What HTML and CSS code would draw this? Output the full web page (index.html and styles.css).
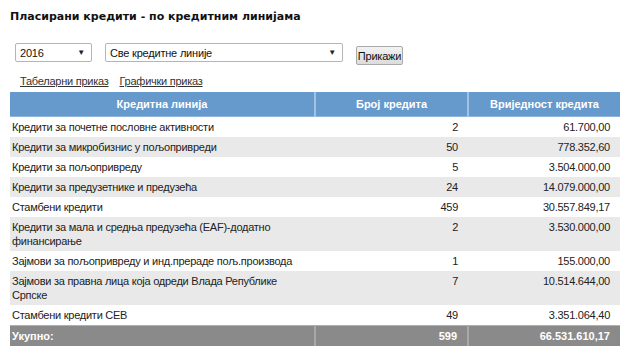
FILE: index.html
```html
<!DOCTYPE html>
<html>
<head>
<meta charset="utf-8">
<link rel="stylesheet" href="styles.css">
</head>
<body>
<div class="page">
  <h1 class="title">Пласирани кредити - по кредитним линијама</h1>
  <div class="controls">
    <div class="select year"><span>2016</span><span class="arrow">▼</span></div>
    <div class="select line"><span>Све кредитне линије</span><span class="arrow">▼</span></div>
    <button class="btn">Прикажи</button>
  </div>
  <div class="links">
    <a class="link" href="#">Табеларни приказ</a>
    <a class="link" href="#">Графички приказ</a>
  </div>
  <table class="grid">
    <colgroup><col class="c1"><col class="c2"><col class="c3"></colgroup>
    <thead>
      <tr><th>Кредитна линија</th><th>Број кредита</th><th>Вриједност кредита</th></tr>
    </thead>
    <tbody>
      <tr><td>Кредити за почетне пословне активности</td><td class="num">2</td><td class="num">61.700,00</td></tr>
      <tr class="alt"><td>Кредити за микробизнис у пољопривреди</td><td class="num">50</td><td class="num">778.352,60</td></tr>
      <tr><td>Кредити за пољопривреду</td><td class="num">5</td><td class="num">3.504.000,00</td></tr>
      <tr class="alt"><td>Кредити за предузетнике и предузећа</td><td class="num">24</td><td class="num">14.079.000,00</td></tr>
      <tr><td>Стамбени кредити</td><td class="num">459</td><td class="num">30.557.849,17</td></tr>
      <tr class="alt"><td>Кредити за мала и средња предузећа (EAF)-додатно финансирање</td><td class="num">2</td><td class="num">3.530.000,00</td></tr>
      <tr><td>Зајмови за пољопривреду и инд.прераде пољ.производа</td><td class="num">1</td><td class="num">155.000,00</td></tr>
      <tr class="alt"><td>Зајмови за правна лица која одреди Влада Републике Српске</td><td class="num">7</td><td class="num">10.514.644,00</td></tr>
      <tr><td>Стамбени кредити СЕВ</td><td class="num">49</td><td class="num">3.351.064,40</td></tr>
    </tbody>
    <tfoot>
      <tr><td>Укупно:</td><td class="num">599</td><td class="num">66.531.610,17</td></tr>
    </tfoot>
  </table>
</div>
</body>
</html>
```
FILE: styles.css
```css
html, body { margin: 0; padding: 0; background: #fff; }
body { font-family: "Liberation Sans", Arial, sans-serif; font-size: 11px; color: #222; }
.page { padding: 10px 14px 0 10px; }
.title { margin: 0; font-family: "DejaVu Sans", Verdana, sans-serif; font-size: 11px; font-weight: bold; color: #111; line-height: 14px; }
.controls { display: flex; align-items: flex-start; margin-top: 19px; padding-left: 5px; height: 22px; }
.select { box-sizing: border-box; height: 19px; border: 1px solid #b5b5b5; border-radius: 2px; display: flex; align-items: center; justify-content: space-between; padding: 0 6px 0 4px; font-size: 11px; color: #111; background: #fff; letter-spacing: -0.2px; }
.select .arrow { font-size: 8px; color: #222; }
.year { width: 77px; }
.line { width: 238px; margin-left: 13px; }
.btn { box-sizing: border-box; margin: 3px 0 0 13px; width: 47px; height: 19px; padding: 0; border: 1px solid #a9a9a9; border-radius: 2px; background: linear-gradient(#f2f2f2, #dcdcdc); font-family: "Liberation Sans", Arial, sans-serif; font-size: 11px; color: #111; letter-spacing: -0.2px; }
.links { display: flex; gap: 11px; padding-left: 10px; margin-top: 9px; height: 18px; }
.link { color: #333; text-decoration: underline; line-height: 14px; letter-spacing: -0.25px; }
.grid { margin-top: 0; border-collapse: collapse; width: 610px; table-layout: fixed; }
.c1 { width: 305px; }
.c2 { width: 153px; }
.c3 { width: 152px; }
.grid th { background: #6699cc; color: #fff; font-weight: bold; height: 24px; padding: 0; box-sizing: border-box; border-right: 2px solid #a3c2e3; border-bottom: 1px solid #8fb3da; text-align: center; }
.grid th:last-child { border-right: none; }
.grid td { padding: 3px 10px 3px 2px; line-height: 14px; vertical-align: top; color: #222; letter-spacing: -0.25px; }
.grid tbody tr.alt td { background: #e9e9e9; }
.grid .num { text-align: right; }
.grid tfoot td { background: #8a8a8a; color: #fff; font-weight: bold; padding-top: 3px; padding-bottom: 3px; border-top: 1px solid #b0b0b0; border-right: 2px solid #a8a8a8; letter-spacing: 0; }
.grid tfoot td:last-child { border-right: none; }
```
